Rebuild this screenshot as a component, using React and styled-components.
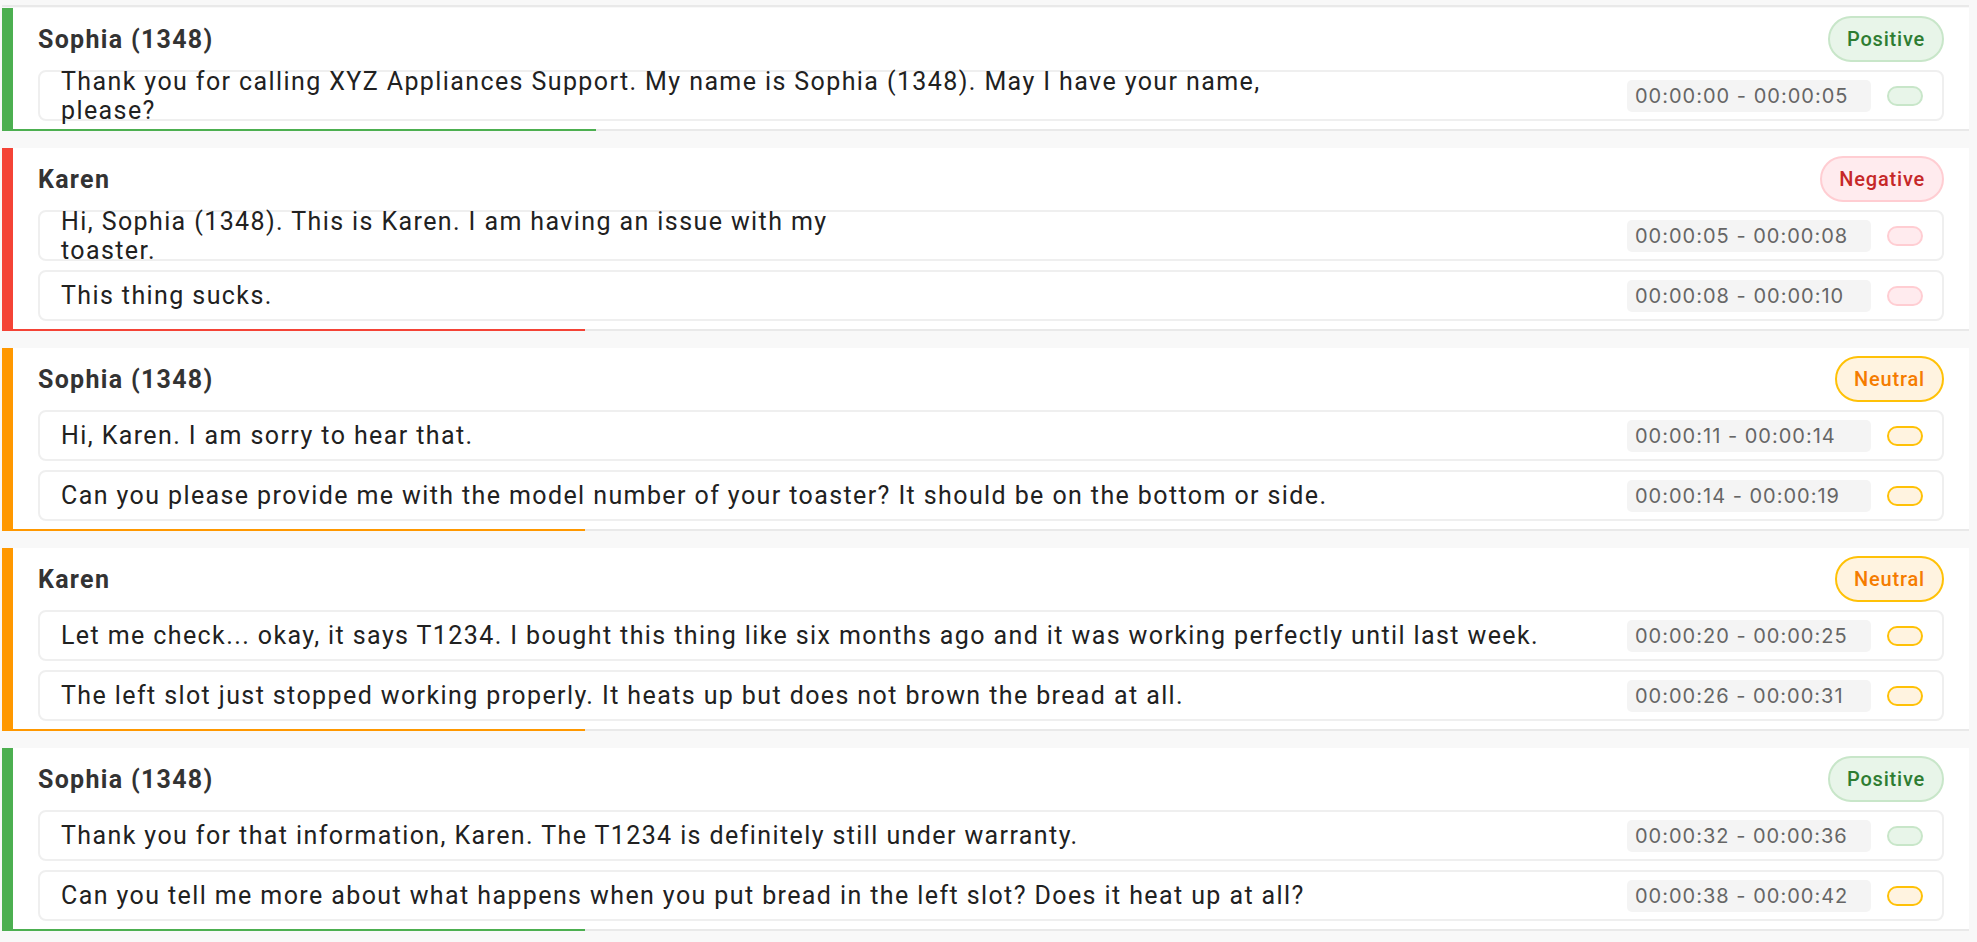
import React from 'react';
import styled, { createGlobalStyle } from 'styled-components';

const GlobalStyle = createGlobalStyle`
  html, body {
    margin: 0;
    padding: 0;
    background: #f8f8f8;
  }
  body {
    font-family: Roboto, "Noto Sans", sans-serif;
  }
`;

const tones = {
  positive: { accent: '#4caf50', bg: '#e8f5e9', border: '#c8e6c9', text: '#2e7d32', label: 'Positive' },
  negative: { accent: '#f44336', bg: '#ffebee', border: '#ffcdd2', text: '#c62828', label: 'Negative' },
  neutral: { accent: '#ff9800', bg: '#fff3e0', border: '#ffc107', text: '#f57c00', label: 'Neutral' },
};

const turns = [
  {
    speaker: 'Sophia (1348)',
    tone: 'positive',
    progress: 583,
    segments: [
      {
        lines: ['Thank you for calling XYZ Appliances Support. My name is Sophia (1348). May I have your name,', 'please?'],
        time: '00:00:00 - 00:00:05',
        tone: 'positive',
      },
    ],
  },
  {
    speaker: 'Karen',
    tone: 'negative',
    progress: 572,
    segments: [
      {
        lines: ['Hi, Sophia (1348). This is Karen. I am having an issue with my', 'toaster.'],
        time: '00:00:05 - 00:00:08',
        tone: 'negative',
      },
      { lines: ['This thing sucks.'], time: '00:00:08 - 00:00:10', tone: 'negative' },
    ],
  },
  {
    speaker: 'Sophia (1348)',
    tone: 'neutral',
    progress: 572,
    segments: [
      { lines: ['Hi, Karen. I am sorry to hear that.'], time: '00:00:11 - 00:00:14', tone: 'neutral' },
      {
        lines: ['Can you please provide me with the model number of your toaster? It should be on the bottom or side.'],
        time: '00:00:14 - 00:00:19',
        tone: 'neutral',
      },
    ],
  },
  {
    speaker: 'Karen',
    tone: 'neutral',
    progress: 572,
    segments: [
      {
        lines: ['Let me check... okay, it says T1234. I bought this thing like six months ago and it was working perfectly until last week.'],
        time: '00:00:20 - 00:00:25',
        tone: 'neutral',
      },
      {
        lines: ['The left slot just stopped working properly. It heats up but does not brown the bread at all.'],
        time: '00:00:26 - 00:00:31',
        tone: 'neutral',
      },
    ],
  },
  {
    speaker: 'Sophia (1348)',
    tone: 'positive',
    progress: 572,
    segments: [
      {
        lines: ['Thank you for that information, Karen. The T1234 is definitely still under warranty.'],
        time: '00:00:32 - 00:00:36',
        tone: 'positive',
      },
      {
        lines: ['Can you tell me more about what happens when you put bread in the left slot? Does it heat up at all?'],
        time: '00:00:38 - 00:00:42',
        tone: 'neutral',
      },
    ],
  },
];

const Page = styled.main`
  box-sizing: border-box;
  min-height: 942px;
  padding: 5px 8px 0 2px;
`;

const TopEdge = styled.div`
  height: 2px;
  margin-bottom: 1px;
  background: #e9e9e9;
`;

const List = styled.div`
  display: flex;
  flex-direction: column;
  gap: 17px;
`;

const Card = styled.section`
  display: flex;
  flex-direction: column;
  background: #ffffff;
  border-left: 11px solid ${(p) => p.$accent};
`;

const CardBody = styled.div`
  display: flex;
  flex-direction: column;
  gap: 9px;
  padding: 8px 25px;
`;

const Header = styled.div`
  display: flex;
  align-items: center;
  justify-content: space-between;
  height: 46px;
  margin-bottom: -1px;
`;

const Speaker = styled.h3`
  margin: 0;
  font-family: Roboto, sans-serif;
  font-size: 25px;
  font-weight: 700;
  letter-spacing: 1.3px;
  color: #333333;
`;

const Badge = styled.span`
  box-sizing: border-box;
  display: inline-flex;
  align-items: center;
  height: 46px;
  padding: 0 17px;
  border: 2px solid ${(p) => p.$tone.border};
  border-radius: 23px;
  background: ${(p) => p.$tone.bg};
  color: ${(p) => p.$tone.text};
  font-family: Roboto, sans-serif;
  font-size: 20px;
  font-weight: 500;
  letter-spacing: 0.8px;
`;

const Segment = styled.div`
  box-sizing: border-box;
  display: flex;
  align-items: center;
  height: 51px;
  padding: 0 19px 0 21px;
  border: 2px solid #efefef;
  border-radius: 8px;
`;

const Text = styled.p`
  flex: 1;
  margin: 0;
  font-family: Roboto, sans-serif;
  font-size: 25px;
  line-height: 29px;
  letter-spacing: 1.4px;
  color: #212121;
  white-space: nowrap;
`;

const Time = styled.span`
  box-sizing: border-box;
  display: flex;
  align-items: center;
  width: 244px;
  height: 32px;
  padding: 0 8px;
  border-radius: 5px;
  background: #f4f4f4;
  color: #666666;
  font-family: Inter, sans-serif;
  font-size: 20px;
  letter-spacing: 1px;
`;

const Dot = styled.span`
  box-sizing: border-box;
  width: 36px;
  height: 20px;
  margin-left: 16px;
  border: 2px solid ${(p) => p.$tone.border};
  border-radius: 10px;
  background: ${(p) => p.$tone.bg};
`;

const BottomLine = styled.div`
  display: flex;
  height: 2px;
  background: #e9e9e9;
`;

const Progress = styled.div`
  width: ${(p) => p.$width}px;
  background: ${(p) => p.$accent};
`;

function Turn({ turn }) {
  const tone = tones[turn.tone];
  return (
    <Card $accent={tone.accent}>
      <CardBody>
        <Header>
          <Speaker>{turn.speaker}</Speaker>
          <Badge $tone={tone}>{tone.label}</Badge>
        </Header>
        {turn.segments.map((seg) => (
          <Segment key={seg.time}>
            <Text>
              {seg.lines.map((line, i) => (
                <React.Fragment key={i}>
                  {i > 0 && <br />}
                  {line}
                </React.Fragment>
              ))}
            </Text>
            <Time>{seg.time}</Time>
            <Dot $tone={tones[seg.tone]} />
          </Segment>
        ))}
      </CardBody>
      <BottomLine>
        <Progress $width={turn.progress} $accent={tone.accent} />
      </BottomLine>
    </Card>
  );
}

export default function App() {
  return (
    <>
      <GlobalStyle />
      <Page>
        <TopEdge />
        <List>
          {turns.map((turn, i) => (
            <Turn key={i} turn={turn} />
          ))}
        </List>
      </Page>
    </>
  );
}
